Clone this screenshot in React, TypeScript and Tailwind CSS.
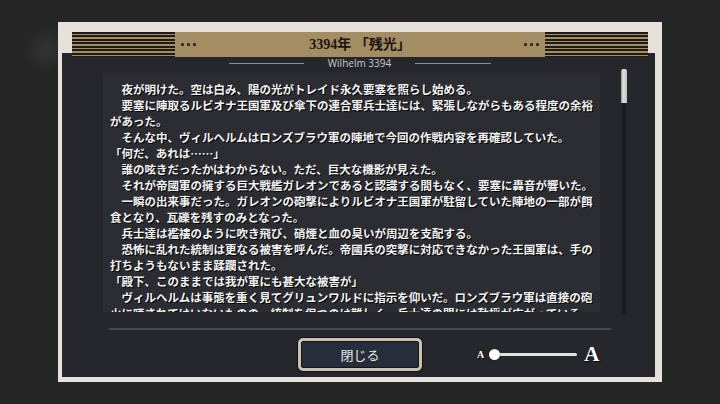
const lines = [
  "　夜が明けた。空は白み、陽の光がトレイド永久要塞を照らし始める。",
  "　要塞に陣取るルビオナ王国軍及び傘下の連合軍兵士達には、緊張しながらもある程度の余裕",
  "があった。",
  "　そんな中、ヴィルヘルムはロンズブラウ軍の陣地で今回の作戦内容を再確認していた。",
  "「何だ、あれは……」",
  "　誰の呟きだったかはわからない。ただ、巨大な機影が見えた。",
  "　それが帝國軍の擁する巨大戦艦ガレオンであると認識する間もなく、要塞に轟音が響いた。",
  "　一瞬の出来事だった。ガレオンの砲撃によりルビオナ王国軍が駐留していた陣地の一部が餌",
  "食となり、瓦礫を残すのみとなった。",
  "　兵士達は襤褸のように吹き飛び、硝煙と血の臭いが周辺を支配する。",
  "　恐怖に乱れた統制は更なる被害を呼んだ。帝國兵の突撃に対応できなかった王国軍は、手の",
  "打ちようもないまま蹂躙された。",
  "「殿下、このままでは我が軍にも甚大な被害が」",
  "　ヴィルヘルムは事態を重く見てグリュンワルドに指示を仰いだ。ロンズブラウ軍は直接の砲",
  "火に晒されてはいないものの、統制を保つのは難しく、兵士達の間には動揺が広がっている。",
];

function Stripes() {
  return (
    <div className="w-[103px] h-full bg-[repeating-linear-gradient(to_bottom,#1e1b16_0px,#1e1b16_2px,#a48c63_2px,#a48c63_3.5px)]" />
  );
}

function Dots() {
  return (
    <div className="flex gap-[3px] mx-[6px]">
      <span className="w-[3px] h-[3px] rounded-full bg-[#1e1b16]" />
      <span className="w-[3px] h-[3px] rounded-full bg-[#1e1b16]" />
      <span className="w-[3px] h-[3px] rounded-full bg-[#1e1b16]" />
    </div>
  );
}

export default function App() {
  return (
    <div className="w-[720px] h-[404px] overflow-hidden flex justify-center pt-[22px] bg-[#262626] bg-[radial-gradient(circle_at_46px_50px,#343434_0px,#262626_22px)]">
      <div className="w-[604px] h-[360px] flex flex-col bg-[#e6e1da] pt-[10px] pl-[4px] pr-[7px] pb-[5px]">
        {/* header bar */}
        <div className="relative z-10 h-[25px] ml-[10px] mr-[7px] flex items-center bg-[#a48c63]">
          <Stripes />
          <Dots />
          <div className="flex-1 text-center text-[14px] font-bold text-[#1a1610] [font-family:'Liberation_Serif','Noto_Sans_CJK_JP',serif]">
            3394年 「残光」
          </div>
          <Dots />
          <Stripes />
        </div>

        {/* main panel */}
        <div className="-mt-[4px] flex-1 flex flex-col bg-[#25272c] [font-family:'Noto_Sans_CJK_JP',sans-serif]">
          <div className="mt-[4px] h-[12px] flex items-center justify-center gap-[24px] pl-[3px]">
            <div className="w-[75px] h-px bg-[#8d8d8d]" />
            <span className="text-[10px] leading-none text-[#c9c9c9] [font-family:'Open_Sans',sans-serif]">
              Wilhelm 3394
            </span>
            <div className="w-[76px] h-px bg-[#8d8d8d]" />
          </div>

          <div className="h-[246px] flex items-start pl-[41px]">
            <div className="mt-[4px] h-[239px] w-[497px] overflow-hidden bg-[#2c2d32] pt-[8px] pl-[7px]">
              {lines.map((l, i) => (
                <div
                  key={i}
                  className="whitespace-pre text-[11.5px] leading-[16px] font-bold text-[#f3f3f3] [text-shadow:1px_1px_0_#000]"
                >
                  {l}
                </div>
              ))}
            </div>
            <div className="ml-[21px] w-[6px] h-[246px] flex flex-col">
              <div className="h-[34px] rounded-t-[2px] bg-[linear-gradient(to_right,#9a9a9a,#e0e0e0_40%,#c0c0c0)]" />
              <div className="flex-1 mx-[1px] bg-[#1b1c20]" />
            </div>
          </div>

          <div className="mt-[13px] ml-[47px] w-[502px] h-[2px] bg-[#454a50]" />

          <div className="mt-[8px] h-[33px] flex items-center">
            <button className="ml-[236px] w-[124px] h-[33px] rounded-[5px] border-[3px] border-[#cbc3b0] shadow-[0_0_0_1px_#111] bg-[#cbc3b0]">
              <div className="w-full h-full rounded-[2px] border border-[#14161b] bg-[#262d3b] flex items-center justify-center text-[13px] text-[#e8e8e8]">
                閉じる
              </div>
            </button>
            <div className="ml-[55px] flex items-center [font-family:'Liberation_Serif',serif] font-bold text-white [text-shadow:1px_1px_0_#000]">
              <span className="text-[10px] leading-none">A</span>
              <div className="relative ml-[5px] w-[89px] h-[11px] flex items-center">
                <div className="ml-[5px] w-[83px] h-[3px] rounded-full bg-[#e2e2e2]" />
                <div className="absolute left-0 top-0 w-[11px] h-[11px] rounded-full bg-white shadow-[0_0_1px_#000]" />
              </div>
              <span className="ml-[6px] text-[21px] leading-none">A</span>
            </div>
          </div>
        </div>
      </div>
    </div>
  );
}
